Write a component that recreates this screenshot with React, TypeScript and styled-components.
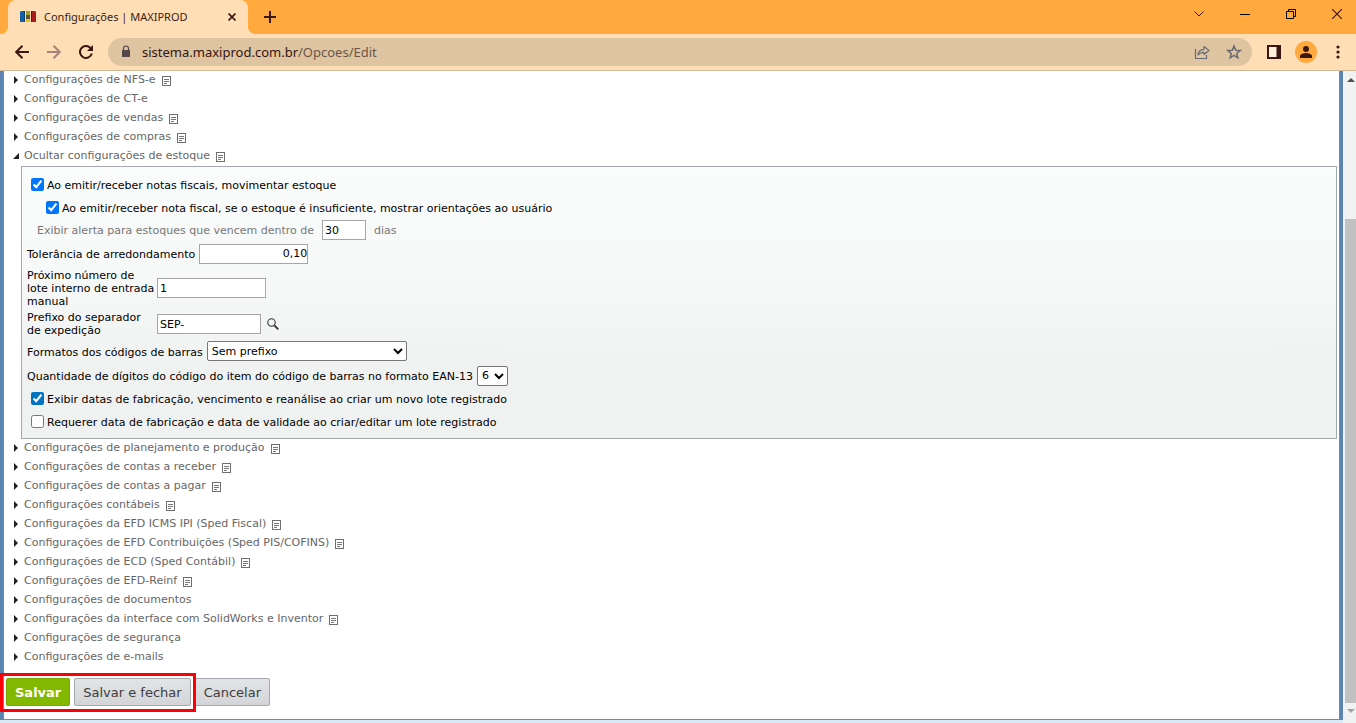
import React, { useState } from "react";
import styled, { createGlobalStyle } from "styled-components";

const GlobalStyle = createGlobalStyle`
  *, *::before, *::after { box-sizing: border-box; }
  body { margin: 0; background: #d9e9f6; overflow: hidden; }
  button, input, select { font-family: inherit; margin: 0; }
`;

const ui = `"DejaVu Sans", Verdana, sans-serif`;

const Window = styled.div`
  display: flex;
  flex-direction: column;
  min-height: 100vh;
  font-family: ${ui};
  font-size: 11px;
  color: #000;
`;

/* Browser frame */

const TabStrip = styled.header`
  display: flex;
  align-items: stretch;
  height: 34px;
  padding-left: 8px;
  background: #ffa93f;
`;

const Tab = styled.div`
  position: relative;
  display: flex;
  align-items: center;
  gap: 8px;
  width: 240px;
  padding: 0 8px 0 12px;
  border-radius: 8px 8px 0 0;
  background: #ffdeb5;
  color: #3b1d12;
  font: 11px/16px "Noto Sans", "Open Sans", sans-serif;

  &::before, &::after {
    content: "";
    position: absolute;
    bottom: 0;
    width: 8px;
    height: 8px;
  }
  &::before {
    left: -8px;
    background: radial-gradient(circle at 0 0, transparent 8px, #ffdeb5 8px);
  }
  &::after {
    right: -8px;
    background: radial-gradient(circle at 100% 0, transparent 8px, #ffdeb5 8px);
  }
`;

const TabTitle = styled.span`
  flex: 1;
  white-space: nowrap;
`;

const IconButton = styled.button<{ $w?: number; $color?: string }>`
  display: flex;
  align-items: center;
  justify-content: center;
  flex: none;
  width: ${(p) => p.$w ?? 32}px;
  padding: 0;
  border: 0;
  background: none;
  color: ${(p) => p.$color ?? "#3b1713"};
`;

const WindowControls = styled.div`
  display: flex;
  gap: 8px;
  margin-left: auto;
  padding-bottom: 6px;
`;

const Toolbar = styled.nav`
  display: flex;
  align-items: center;
  height: 37px;
  padding: 0 2px 0 6px;
  border-bottom: 1px solid #d0b795;
  background: #ffdeb5;
`;

const AddressBar = styled.div`
  display: flex;
  align-items: center;
  flex: 1;
  height: 28px;
  margin: 0 6px;
  padding: 0 2px 0 12px;
  border-radius: 14px;
  background: #dfc4a1;
`;

const Address = styled.div`
  flex: 1;
  margin-left: 10px;
  color: #6a5648;
  font: 13px/20px "Noto Sans", "Open Sans", sans-serif;
`;

const Host = styled.span`
  color: #35150f;
`;

/* Page */

const Viewport = styled.div`
  display: flex;
  flex: 1;
`;

const Page = styled.main`
  flex: 1;
  margin-bottom: 3px;
  border: solid #5b84b3;
  border-width: 0 3px;
`;

const Sheet = styled.form`
  height: 100%;
  padding: 0 2px 12px 2px;
  border: 1px solid #858585;
  border-top: 0;
  background: #fff;
`;

const SectionRow = styled.div`
  display: flex;
  align-items: flex-start;
  gap: 6px;
  height: 19px;
  padding-left: 7px;
`;

const SectionToggle = styled.button`
  display: flex;
  align-items: center;
  gap: 5px;
  padding: 0;
  border: 0;
  background: none;
  color: #666;
  font-size: 11px;
  line-height: 18px;
  white-space: nowrap;
`;

const NoteButton = styled.button`
  display: flex;
  padding: 5px 0 0;
  border: 0;
  background: none;
`;

const Panel = styled.section`
  display: flex;
  flex-direction: column;
  margin-left: 15px;
  padding: 6px 5px 5px;
  border: 1px solid #a3a9af;
  background: linear-gradient(#fafcfb, #f7f9f8 40%, #f0f2f2 75%);
`;

const FieldRow = styled.div<{ $h?: number; $indent?: number; $gap?: number }>`
  display: flex;
  align-items: center;
  gap: ${(p) => p.$gap ?? 4}px;
  height: ${(p) => p.$h ?? 23}px;
  padding-left: ${(p) => p.$indent ?? 0}px;
  line-height: 13px;
`;

const Label = styled.label<{ $w?: number; $muted?: boolean }>`
  width: ${(p) => (p.$w ? `${p.$w}px` : "auto")};
  color: ${(p) => (p.$muted ? "#777" : "#000")};
`;

const LowLabel = styled.label`
  padding-top: 2px;
`;

const Check = styled.input<{ $accent?: string }>`
  width: 13px;
  height: 13px;
  accent-color: ${(p) => p.$accent ?? "auto"};
`;

const TextField = styled.input<{ $w: number; $right?: boolean }>`
  width: ${(p) => p.$w}px;
  height: 20px;
  padding: 0 ${(p) => (p.$right ? 0 : 2)}px;
  border: 1px solid #a6a6a6;
  background: #fff;
  font-size: 11px;
  text-align: ${(p) => (p.$right ? "right" : "left")};
`;

const Select = styled.select<{ $w: number }>`
  width: ${(p) => p.$w}px;
  height: 20px;
  border: 1px solid #767676;
  border-radius: 2px;
  background-color: #fff;
  color: #000;
  font-size: 11px;
`;

const Actions = styled.div`
  display: flex;
  gap: 4px;
  padding: 11px 0 0;
`;

const Highlighted = styled.div`
  position: relative;
  display: flex;
  gap: 4px;

  &::after {
    content: "";
    position: absolute;
    z-index: 1;
    inset: -5px -5px -6px -6px;
    border: 3px solid #fb0007;
    pointer-events: none;
  }
`;

const ActionButton = styled.button<{ $primary?: boolean }>`
  height: 28px;
  padding: 0 8px;
  border: 1px solid ${(p) => (p.$primary ? "#76a800" : "#a3a8b0")};
  border-radius: 2px;
  background: ${(p) => (p.$primary ? "#82b800" : "linear-gradient(#e3e4e6, #d2d4d7)")};
  color: ${(p) => (p.$primary ? "#fff" : "#3c3c3c")};
  font-size: 13px;
  font-weight: ${(p) => (p.$primary ? 700 : 400)};
  white-space: nowrap;
`;

/* Scroll bar */

const ScrollTrack = styled.div`
  display: flex;
  flex-direction: column;
  align-items: center;
  width: 13px;
  padding: 7px 0 10px 2px;
  background: #f1f2f2;
`;

const ScrollGap = styled.div`
  flex: 137;
`;

const ScrollThumb = styled.div`
  flex: 485;
  align-self: stretch;
  margin-bottom: 6px;
  background: #c1c1c1;
`;

const FavIcon = () => (
  <svg width="16" height="16" viewBox="0 0 16 16" aria-hidden="true">
    <path d="M0 3l1-1h4v11H0z" fill="#1561a8" />
    <path d="M4 2h1v11H4z" fill="#0c3f73" />
    <path d="M6 2h4v4H6z" fill="#a3a02c" />
    <path d="M6 6h4v4H6z" fill="#5f5630" />
    <path d="M6 10h4v3H6z" fill="#e3c21c" />
    <path d="M11 2h4l1 1v10h-5z" fill="#a81d1d" />
    <path d="M11 2h1v11h-1z" fill="#5e1215" />
  </svg>
);

const NoteIcon = () => (
  <svg width="9" height="10" viewBox="0 0 9 10" aria-hidden="true" shapeRendering="crispEdges">
    <path d="M.5.5h8v9h-8z" fill="#fff" stroke="#6f6f6f" />
    <path d="M2 3.500h5M2 5.500h5M2 7.500h3" stroke="#777" />
  </svg>
);

const Arrow = ({ open }: { open?: boolean }) => (
  <svg width="6" height="10" viewBox="0 0 6 10" aria-hidden="true">
    <path d={open ? "M6 2v6H0z" : "M1 1l4 4-4 4z"} fill="#222" />
  </svg>
);

const sectionsBefore: [string, boolean][] = [
  ["Configurações de NFS-e", true],
  ["Configurações de CT-e", false],
  ["Configurações de vendas", true],
  ["Configurações de compras", true],
];

const sectionsAfter: [string, boolean][] = [
  ["Configurações de planejamento e produção", true],
  ["Configurações de contas a receber", true],
  ["Configurações de contas a pagar", true],
  ["Configurações contábeis", true],
  ["Configurações da EFD ICMS IPI (Sped Fiscal)", true],
  ["Configurações de EFD Contribuições (Sped PIS/COFINS)", true],
  ["Configurações de ECD (Sped Contábil)", true],
  ["Configurações de EFD-Reinf", true],
  ["Configurações de documentos", false],
  ["Configurações da interface com SolidWorks e Inventor", true],
  ["Configurações de segurança", false],
  ["Configurações de e-mails", false],
];

function Section({ title, note, open, onToggle }: { title: string; note: boolean; open?: boolean; onToggle?: () => void }) {
  return (
    <SectionRow>
      <SectionToggle type="button" aria-expanded={!!open} onClick={onToggle}>
        <Arrow open={open} />
        {title}
      </SectionToggle>
      {note && (
        <NoteButton type="button" aria-label={`Notas: ${title}`}>
          <NoteIcon />
        </NoteButton>
      )}
    </SectionRow>
  );
}

function BrowserFrame() {
  return (
    <>
      <TabStrip>
        <Tab>
          <FavIcon />
          <TabTitle>Configurações | MAXIPROD</TabTitle>
          <IconButton type="button" $w={16} aria-label="Fechar guia">
            <svg width="8" height="8" viewBox="0 0 8 8" stroke="currentColor" strokeWidth="1.600">
              <path d="M.5.5l7 7M7.500.5l-7 7" />
            </svg>
          </IconButton>
        </Tab>
        <IconButton type="button" $w={44} aria-label="Nova guia">
          <svg width="12" height="12" viewBox="0 0 12 12" stroke="currentColor" strokeWidth="2">
            <path d="M6 0v12M0 6h12" />
          </svg>
        </IconButton>
        <WindowControls>
          <IconButton type="button" $w={38} aria-label="Pesquisar guias">
            <svg width="10" height="6" viewBox="0 0 10 6" fill="none" stroke="currentColor">
              <path d="M.5.5L5 5 9.500.5" />
            </svg>
          </IconButton>
          <IconButton type="button" $w={38} aria-label="Minimizar" $color="#000">
            <svg width="10" height="1" viewBox="0 0 10 1"><path d="M0 0h10v1H0z" /></svg>
          </IconButton>
          <IconButton type="button" $w={38} aria-label="Restaurar" $color="#000">
            <svg width="10" height="10" viewBox="0 0 10 10" fill="none" stroke="currentColor">
              <path d="M.5 2.500h7v7h-7zM2.500 2V.5h7v7H8" />
            </svg>
          </IconButton>
          <IconButton type="button" $w={38} aria-label="Fechar">
            <svg width="10" height="10" viewBox="0 0 10 10" stroke="currentColor" strokeWidth="1.200">
              <path d="M0 0l10 10M10 0L0 10" />
            </svg>
          </IconButton>
        </WindowControls>
      </TabStrip>
      <Toolbar>
        <IconButton type="button" aria-label="Voltar">
          <svg width="14" height="14" viewBox="0 0 14 14" fill="none" stroke="currentColor" strokeWidth="2">
            <path d="M14 7H1.500M7.500.7L1.200 7l6.300 6.300" />
          </svg>
        </IconButton>
        <IconButton type="button" aria-label="Avançar" $color="#a5847a">
          <svg width="14" height="14" viewBox="0 0 14 14" fill="none" stroke="currentColor" strokeWidth="2">
            <path d="M0 7h12.500M6.500.7L12.800 7l-6.300 6.300" />
          </svg>
        </IconButton>
        <IconButton type="button" aria-label="Recarregar">
          <svg width="14" height="14" viewBox="0 0 14 14" fill="none" stroke="currentColor" strokeWidth="2">
            <path d="M11.500 3A6 6 0 1 0 12.800 8.500" />
            <path d="M14 0v6H8z" fill="currentColor" stroke="none" />
          </svg>
        </IconButton>
        <AddressBar>
          <svg width="12" height="14" viewBox="0 0 12 14" fill="none" aria-hidden="true">
            <path d="M2 5h8v7H2z" fill="#55484a" />
            <path d="M3.500 5V3.500a2.500 2.500 0 0 1 5 0V5" stroke="#55484a" strokeWidth="1.200" />
          </svg>
          <Address><Host>sistema.maxiprod.com.br</Host>/Opcoes/Edit</Address>
          <IconButton type="button" aria-label="Compartilhar" $color="#6b6a72">
            <svg width="16" height="16" viewBox="0 0 16 16" fill="none" stroke="currentColor" strokeWidth="1.200">
              <path d="M1.500 5v9.500h11V11" />
              <path d="M4 11c.3-3.800 2.500-5.500 6-5.700V2.500L15 6.500 10 10.500V8.300C7.500 8.300 5.500 9 4 11z" strokeLinejoin="round" />
            </svg>
          </IconButton>
          <IconButton type="button" aria-label="Favoritar" $color="#6b6a72">
            <svg width="16" height="16" viewBox="0 0 16 16" fill="none" stroke="currentColor" strokeWidth="1.500">
              <path d="M8 2l1.700 4.200 4.500.3-3.500 2.900 1.200 4.400L8 11.400l-3.900 2.400 1.200-4.400-3.500-2.900 4.500-.3z" />
            </svg>
          </IconButton>
        </AddressBar>
        <IconButton type="button" aria-label="Painel lateral">
          <svg width="14" height="14" viewBox="0 0 14 14">
            <path d="M1 1h12v12H1z" fill="#fff0dc" stroke="currentColor" strokeWidth="2" />
            <path d="M9.500 1H13v12H9.500z" fill="currentColor" />
          </svg>
        </IconButton>
        <IconButton type="button" aria-label="Perfil">
          <svg width="22" height="22" viewBox="0 0 22 22">
            <circle cx="11" cy="11" r="11" fill="#ffa93f" />
            <circle cx="11" cy="8" r="3" fill="currentColor" />
            <path d="M5 17v-2c0-2 4-3 6-3s6 1 6 3v2z" fill="currentColor" />
          </svg>
        </IconButton>
        <IconButton type="button" aria-label="Menu">
          <svg width="4" height="14" viewBox="0 0 4 14" fill="currentColor">
            <circle cx="2" cy="2" r="1.600" />
            <circle cx="2" cy="7" r="1.600" />
            <circle cx="2" cy="12" r="1.600" />
          </svg>
        </IconButton>
      </Toolbar>
    </>
  );
}

function StockPanel() {
  return (
    <Panel>
      <FieldRow $indent={4} $gap={3}>
        <Check type="checkbox" id="mov" defaultChecked />
        <LowLabel htmlFor="mov">Ao emitir/receber notas fiscais, movimentar estoque</LowLabel>
      </FieldRow>
      <FieldRow $indent={19} $gap={3}>
        <Check type="checkbox" id="insuf" defaultChecked />
        <LowLabel htmlFor="insuf">
          Ao emitir/receber nota fiscal, se o estoque é insuficiente, mostrar orientações ao usuário
        </LowLabel>
      </FieldRow>
      <FieldRow $h={22} $indent={10} $gap={8}>
        <Label htmlFor="alerta" $muted>Exibir alerta para estoques que vencem dentro de</Label>
        <TextField id="alerta" $w={44} defaultValue="30" />
        <Label as="span" $muted>dias</Label>
      </FieldRow>
      <FieldRow $h={25}>
        <LowLabel htmlFor="tol">Tolerância de arredondamento</LowLabel>
        <TextField id="tol" $w={109} $right defaultValue="0,10" />
      </FieldRow>
      <FieldRow $h={44} $gap={2}>
        <Label htmlFor="lote" $w={128}>Próximo número de lote interno de entrada manual</Label>
        <TextField id="lote" $w={109} defaultValue="1" />
      </FieldRow>
      <FieldRow $h={28} $gap={2}>
        <Label htmlFor="prefixo" $w={128}>Prefixo do separador de expedição</Label>
        <TextField id="prefixo" $w={104} defaultValue="SEP-" />
        <IconButton type="button" $w={20} aria-label="Pesquisar prefixo">
          <svg width="12" height="12" viewBox="0 0 12 12" fill="none" stroke="#333">
            <circle cx="4.500" cy="4.500" r="3.700" strokeWidth="1.100" />
            <path d="M7.300 7.300l4 4" strokeWidth="1.900" />
          </svg>
        </IconButton>
      </FieldRow>
      <FieldRow $h={26}>
        <LowLabel htmlFor="formato">Formatos dos códigos de barras</LowLabel>
        <Select id="formato" $w={200}><option>Sem prefixo</option></Select>
      </FieldRow>
      <FieldRow>
        <LowLabel htmlFor="digitos">Quantidade de dígitos do código do item do código de barras no formato EAN-13</LowLabel>
        <Select id="digitos" $w={31}><option>6</option></Select>
      </FieldRow>
      <FieldRow $indent={4} $gap={3}>
        <Check type="checkbox" id="datas" $accent="#0074c2" defaultChecked />
        <LowLabel htmlFor="datas">
          Exibir datas de fabricação, vencimento e reanálise ao criar um novo lote registrado
        </LowLabel>
      </FieldRow>
      <FieldRow $indent={4} $gap={3}>
        <Check type="checkbox" id="requerer" />
        <LowLabel htmlFor="requerer">
          Requerer data de fabricação e data de validade ao criar/editar um lote registrado
        </LowLabel>
      </FieldRow>
    </Panel>
  );
}

export default function App() {
  const [open, setOpen] = useState(true);
  return (
    <Window>
      <GlobalStyle />
      <BrowserFrame />
      <Viewport>
        <Page>
          <Sheet onSubmit={(e) => e.preventDefault()}>
            {sectionsBefore.map(([title, note]) => <Section key={title} title={title} note={note} />)}
            <Section title="Ocultar configurações de estoque" note open={open} onToggle={() => setOpen(!open)} />
            {open && <StockPanel />}
            {sectionsAfter.map(([title, note]) => <Section key={title} title={title} note={note} />)}
            <Actions>
              <Highlighted>
                <ActionButton $primary>Salvar</ActionButton>
                <ActionButton>Salvar e fechar</ActionButton>
              </Highlighted>
              <ActionButton type="button">Cancelar</ActionButton>
            </Actions>
          </Sheet>
        </Page>
        <ScrollTrack aria-hidden="true">
          <svg width="8" height="4" viewBox="0 0 8 4"><path d="M4 0l4 4H0z" fill="#505050" /></svg>
          <ScrollGap />
          <ScrollThumb />
          <svg width="8" height="4" viewBox="0 0 8 4"><path d="M0 0h8L4 4z" fill="#a3a3a3" /></svg>
        </ScrollTrack>
      </Viewport>
    </Window>
  );
}
